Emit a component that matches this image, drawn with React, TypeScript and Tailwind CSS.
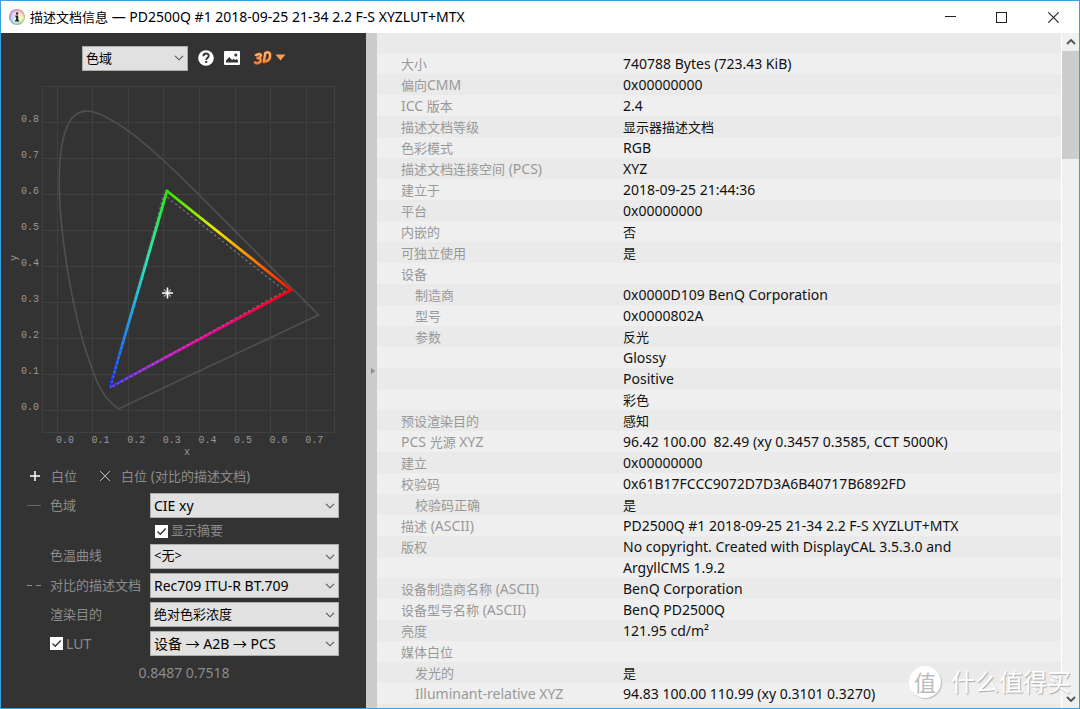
import React from "react";

const CJK = "font-['Noto_Sans','Noto_Sans_CJK_SC',sans-serif]";

type Row = { label?: string; value?: string; indent?: boolean };

const rows: Row[] = [
  {},
  { label: "大小", value: "740788 Bytes (723.43 KiB)" },
  { label: "偏向CMM", value: "0x00000000" },
  { label: "ICC 版本", value: "2.4" },
  { label: "描述文档等级", value: "显示器描述文档" },
  { label: "色彩模式", value: "RGB" },
  { label: "描述文档连接空间 (PCS)", value: "XYZ" },
  { label: "建立于", value: "2018-09-25 21:44:36" },
  { label: "平台", value: "0x00000000" },
  { label: "内嵌的", value: "否" },
  { label: "可独立使用", value: "是" },
  { label: "设备" },
  { label: "制造商", value: "0x0000D109 BenQ Corporation", indent: true },
  { label: "型号", value: "0x0000802A", indent: true },
  { label: "参数", value: "反光", indent: true },
  { value: "Glossy" },
  { value: "Positive" },
  { value: "彩色" },
  { label: "预设渲染目的", value: "感知" },
  { label: "PCS 光源 XYZ", value: "96.42 100.00  82.49 (xy 0.3457 0.3585, CCT 5000K)" },
  { label: "建立", value: "0x00000000" },
  { label: "校验码", value: "0x61B17FCCC9072D7D3A6B40717B6892FD" },
  { label: "校验码正确", value: "是", indent: true },
  { label: "描述 (ASCII)", value: "PD2500Q #1 2018-09-25 21-34 2.2 F-S XYZLUT+MTX" },
  { label: "版权", value: "No copyright. Created with DisplayCAL 3.5.3.0 and" },
  { value: "ArgyllCMS 1.9.2" },
  { label: "设备制造商名称 (ASCII)", value: "BenQ Corporation" },
  { label: "设备型号名称 (ASCII)", value: "BenQ PD2500Q" },
  { label: "亮度", value: "121.95 cd/m²" },
  { label: "媒体白位" },
  { label: "发光的", value: "是", indent: true },
  { label: "Illuminant-relative XYZ", value: "94.83 100.00 110.99 (xy 0.3101 0.3270)", indent: true },
  {},
];

const isHan = (s: string) => /[\u4e00-\u9fff]/.test(s);

/** Han runs are set one pixel smaller than the Latin runs beside them. */
function Mixed({ text }: { text: string }) {
  return (
    <>
      {text.split(/([\u4e00-\u9fff]+)/).map((part, i) =>
        isHan(part) ? (
          <span key={i} className="text-[13px]">
            {part}
          </span>
        ) : (
          part
        ),
      )}
    </>
  );
}

const px = (x: number) => 57 + x * 356;
const py = (y: number) => 410.5 - y * 360;

const locus: [number, number][] = [
  [0.1741, 0.005], [0.1714, 0.0051], [0.1644, 0.0109], [0.1566, 0.0177], [0.144, 0.0297],
  [0.1355, 0.0399], [0.1241, 0.0578], [0.1096, 0.0868], [0.0925, 0.1327], [0.0705, 0.2007],
  [0.0475, 0.295], [0.026, 0.4127], [0.0108, 0.5384], [0.0066, 0.6548], [0.0166, 0.7502],
  [0.0412, 0.811], [0.079, 0.8315], [0.117, 0.824], [0.1565, 0.8045], [0.1942, 0.781],
  [0.2303, 0.754], [0.2658, 0.7243], [0.3016, 0.6923], [0.3373, 0.6589], [0.3731, 0.6245],
  [0.4441, 0.5547], [0.5125, 0.4866], [0.5752, 0.4242], [0.627, 0.3725], [0.6915, 0.3083],
  [0.7347, 0.2653],
];

function locusPath() {
  const p = locus.map(([x, y]) => [px(x), py(y)]);
  let d = `M${p[0][0]} ${p[0][1]}`;
  for (let i = 0; i < p.length - 1; i++) {
    const a = p[Math.max(0, i - 1)];
    const b = p[i];
    const c = p[i + 1];
    const e = p[Math.min(p.length - 1, i + 2)];
    d += `C${b[0] + (c[0] - a[0]) / 6} ${b[1] + (c[1] - a[1]) / 6} ${c[0] - (e[0] - b[0]) / 6} ${c[1] - (e[1] - b[1]) / 6} ${c[0]} ${c[1]}`;
  }
  return d + "Z";
}

function Gamut() {
  const ticksX = [0, 0.1, 0.2, 0.3, 0.4, 0.5, 0.6, 0.7];
  const ticksY = [0, 0.1, 0.2, 0.3, 0.4, 0.5, 0.6, 0.7, 0.8];
  const tick = "fill-[#989898] font-['Liberation_Mono',monospace] text-[10px]";
  return (
    <svg viewBox="0 78 350 382" className="h-[382px] w-[350px] shrink-0" role="img" aria-label="CIE xy">
      <defs>
        <linearGradient id="gr" gradientUnits="userSpaceOnUse" x1="167" y1="191" x2="291" y2="290">
          <stop offset="0" stopColor="#37e000" />
          <stop offset="0.22" stopColor="#90ee00" />
          <stop offset="0.4" stopColor="#f2e600" />
          <stop offset="0.62" stopColor="#ff9800" />
          <stop offset="0.85" stopColor="#ff4800" />
          <stop offset="1" stopColor="#f01010" />
        </linearGradient>
        <linearGradient id="rb" gradientUnits="userSpaceOnUse" x1="291" y1="290" x2="110" y2="387">
          <stop offset="0" stopColor="#ff0008" />
          <stop offset="0.25" stopColor="#f80058" />
          <stop offset="0.55" stopColor="#f000b8" />
          <stop offset="0.75" stopColor="#b420e0" />
          <stop offset="1" stopColor="#3a2cf0" />
        </linearGradient>
        <linearGradient id="bg" gradientUnits="userSpaceOnUse" x1="110" y1="387" x2="167" y2="191">
          <stop offset="0" stopColor="#1428f0" />
          <stop offset="0.25" stopColor="#0c80ff" />
          <stop offset="0.45" stopColor="#10c8f0" />
          <stop offset="0.65" stopColor="#20f0c0" />
          <stop offset="0.85" stopColor="#28ee60" />
          <stop offset="1" stopColor="#30e010" />
        </linearGradient>
      </defs>
      <g stroke="#404040" fill="none">
        <rect x="42.5" y="86.5" width="292" height="346" />
        {ticksX.map((t) => (
          <path key={t} d={`M${Math.floor(px(t)) + 0.5} 86V432`} />
        ))}
        {ticksY.map((t) => (
          <path key={t} d={`M42 ${Math.floor(py(t)) + 0.5}H334`} />
        ))}
      </g>
      <path d={locusPath()} fill="none" stroke="#505050" strokeWidth="1.6" />
      <g fill="none" strokeWidth="2.8" strokeLinecap="round">
        <path d="M167 191L291 290" stroke="url(#gr)" />
        <path d="M291 290L110.500 387" stroke="url(#rb)" />
        <path d="M110 387L167 191" stroke="url(#bg)" />
      </g>
      <path
        d={`M${px(0.15)} ${py(0.063)}L${px(0.3)} ${py(0.6)}L${px(0.64)} ${py(0.332)}Z`}
        fill="none"
        stroke="#808080"
        strokeOpacity="0.8"
        strokeWidth="1.3"
        strokeDasharray="2.500 2.500"
      />
      <path d="M164 289.500L171 296.500M171 289.500L164 296.500" stroke="#a0a0a0" strokeWidth="1.2" />
      <path d="M162 293H173M167.500 287.500V298.500" stroke="#fff" strokeWidth="1.6" />
      {ticksX.map((t) => (
        <text key={t} x={px(t) + 8} y="443" textAnchor="middle" className={tick}>
          {t.toFixed(1)}
        </text>
      ))}
      {ticksY.map((t) => (
        <text key={t} x="39" y={py(t) - 0.5} textAnchor="end" className={tick}>
          {t.toFixed(1)}
        </text>
      ))}
      <text x="187" y="455" textAnchor="middle" className={tick}>x</text>
      <text transform="translate(17 258) rotate(-90)" textAnchor="middle" className={tick}>y</text>
    </svg>
  );
}

function Select({ id, label, value, width }: { id: string; label?: string; value: string; width: string }) {
  return (
    <div className={`relative h-[25px] ${width}`}>
      <select
        id={id}
        aria-label={label}
        className={`h-full w-full appearance-none rounded-none border border-[#adadad] bg-[#e1e1e1] pl-[3px] pr-5 text-black outline-none ${
          isHan(value) && !/[A-Z]/.test(value) ? "text-[13px]" : "text-[14px]"
        }`}
      >
        <option>{value}</option>
      </select>
      <svg viewBox="0 0 10 6" className="pointer-events-none absolute right-1 top-[10px] h-[6px] w-[10px]">
        <path d="M1 0.800L5 4.800L9 0.800" fill="none" stroke="#555" strokeWidth="1.1" />
      </svg>
    </div>
  );
}

function Check({ id, label }: { id: string; label: string }) {
  return (
    <label htmlFor={id} className="flex items-center gap-[3px]">
      <span className="relative size-[13px]">
        <input id={id} type="checkbox" defaultChecked className="block size-[13px] appearance-none bg-white" />
        <svg viewBox="0 0 13 13" className="pointer-events-none absolute inset-0">
          <path d="M2.500 6.500L5.300 9.300L10.700 3.500" fill="none" stroke="#333" strokeWidth="1.3" />
        </svg>
      </span>
      <Mixed text={label} />
    </label>
  );
}

function Toolbar() {
  return (
    <div className="flex h-[45px] items-center pl-[81px] pt-1">
      <Select id="view" label="视图" value="色域" width="w-[106px]" />
      <button aria-label="帮助" className="ml-[10px]">
        <svg viewBox="0 0 16 16" className="size-4">
          <circle cx="8" cy="8" r="7.800" fill="#fff" />
          <path d="M5.400 6.300C5.400 2.600 10.700 2.700 10.700 5.900C10.700 7.800 8.200 7.900 8.200 10" fill="none" stroke="#333" strokeWidth="1.900" />
          <rect x="7.200" y="11" width="2" height="2" fill="#333" />
        </svg>
      </button>
      <button aria-label="保存图像" className="ml-[10px]">
        <svg viewBox="0 0 16 14" className="h-[14px] w-4">
          <rect width="16" height="14" rx="1" fill="#fff" />
          <path d="M2 11.500V9.500L5.300 6L8 9L9.800 7.800L11 9L12.500 8L14 9.500V11.500Z" fill="#333" />
          <circle cx="11.800" cy="4" r="1.500" fill="#333" />
        </svg>
      </button>
      <button aria-label="3D" className="ml-[13px] flex items-center">
        <svg viewBox="0 0 34 18" className="h-[18px] w-[34px]">
          <defs>
            <linearGradient id="o" gradientUnits="userSpaceOnUse" x1="0" y1="2" x2="0" y2="16">
              <stop offset="0" stopColor="#ffc28a" />
              <stop offset="1" stopColor="#f47c2c" />
            </linearGradient>
          </defs>
          <g fill="none" strokeLinejoin="round">
            <g stroke="#8a4216" strokeWidth="3.600">
              <path d="M2.300 7C4 4.600 8.600 4.200 7.800 7C7.400 8.700 5.500 9 4.700 9.200C9 9 8 13.200 5.300 14C3.600 14.500 2 14 1.800 12.500" />
              <path d="M10.800 12.800L12.300 4L14.500 3.300C18.300 2.600 18 11.200 13.200 12.200Z" />
            </g>
            <g stroke="url(#o)" strokeWidth="2.200">
              <path d="M2.300 7C4 4.600 8.600 4.200 7.800 7C7.400 8.700 5.500 9 4.700 9.200C9 9 8 13.200 5.300 14C3.600 14.500 2 14 1.800 12.500" />
              <path d="M10.800 12.800L12.300 4L14.500 3.300C18.300 2.600 18 11.200 13.200 12.200Z" />
            </g>
          </g>
          <path d="M22.500 5.500H32.500L27.500 11.500Z" fill="#ff9a48" />
        </svg>
      </button>
    </div>
  );
}

function Controls() {
  return (
    <div className="pr-[27px] text-[14px] text-[#8c8c8c]">
      <div className="flex h-[29px] items-center pl-7">
        <svg viewBox="0 0 12 12" className="size-3">
          <path d="M1 6H11M6 1V11" stroke="#fff" strokeWidth="1.5" />
        </svg>
        <span className="ml-[10px]"><Mixed text="白位" /></span>
        <svg viewBox="0 0 12 12" className="ml-[22px] size-3">
          <path d="M1 1L11 11M11 1L1 11" stroke="#111" strokeWidth="2.600" />
          <path d="M1 1L11 11M11 1L1 11" stroke="#aaa" strokeWidth="1.100" />
        </svg>
        <span className="ml-[10px]"><Mixed text="白位 (对比的描述文档)" /></span>
      </div>
      <div className="grid grid-cols-[23px_100px_1fr] items-center pl-[26px]">
        <span className="h-px w-[14px] bg-[#666]" />
        <label htmlFor="space" className="flex h-[31px] items-center whitespace-nowrap"><Mixed text="色域" /></label>
        <Select id="space" value="CIE xy" width="w-full" />

        <div className="col-start-3 flex h-5 items-center pl-[5px]">
          <Check id="summary" label="显示摘要" />
        </div>

        <label htmlFor="locus" className="col-start-2 flex h-[30px] items-center whitespace-nowrap"><Mixed text="色温曲线" /></label>
        <Select id="locus" value="<无>" width="w-full" />

        <span className="flex gap-1">
          <span className="h-px w-[5px] bg-[#8c8c8c]" />
          <span className="h-px w-[5px] bg-[#8c8c8c]" />
        </span>
        <label htmlFor="compare" className="flex h-[29px] items-center whitespace-nowrap"><Mixed text="对比的描述文档" /></label>
        <Select id="compare" value="Rec709 ITU-R BT.709" width="w-full" />

        <label htmlFor="intent" className="col-start-2 flex h-[29px] items-center whitespace-nowrap"><Mixed text="渲染目的" /></label>
        <Select id="intent" value="绝对色彩浓度" width="w-full" />

        <div className="col-start-2 flex h-[29px] items-center">
          <Check id="lut" label="LUT" />
        </div>
        <Select id="direction" label="LUT" value="设备 → A2B → PCS" width="w-full" />
      </div>
      <p className="mt-1 h-[21px] pl-7 text-center">0.8487 0.7518</p>
    </div>
  );
}

function TitleBar() {
  return (
    <header className="flex h-8 shrink-0 items-center bg-white text-black">
      <span className="relative ml-2 mr-[5px] flex size-4 items-center justify-center rounded-full bg-[conic-gradient(#f6a8c8,#f7c9a0,#eef0a0,#a8e8a0,#a0e8e0,#a8b8f4,#d8a8f0,#f6a8c8)] ring-1 ring-inset ring-[#7a7a7a66]">
        <svg viewBox="0 0 16 16" className="size-4">
          <circle cx="8" cy="8" r="5.500" fill="#fff" opacity="0.550" />
          <path d="M7 3.500H9.200V5.500H7ZM6.300 6.600H9.200V11.300H10.200V12.500H6V11.300H7.100V7.800H6.300Z" fill="#222" />
        </svg>
      </span>
      <h1 className="flex-1 truncate text-[14px]">
        <Mixed text="描述文档信息 — PD2500Q #1 2018-09-25 21-34 2.2 F-S XYZLUT+MTX" />
      </h1>
      <div className="flex">
        <button aria-label="最小化" className="flex h-8 w-[51px] items-center justify-center">
          <svg viewBox="0 0 11 11" className="size-[11px]"><path d="M0 4.500H11" stroke="#222" /></svg>
        </button>
        <button aria-label="最大化" className="flex h-8 w-[51px] items-center justify-center">
          <svg viewBox="0 0 11 11" className="size-[11px]"><rect x="0.500" y="0.500" width="10" height="10" fill="none" stroke="#222" /></svg>
        </button>
        <button aria-label="关闭" className="flex h-8 w-[52px] items-center justify-center">
          <svg viewBox="0 0 11 11" className="size-[11px]"><path d="M0.300 0.300L10.700 10.700M10.700 0.300L0.300 10.700" stroke="#222" strokeWidth="1.100" /></svg>
        </button>
      </div>
    </header>
  );
}

export default function App() {
  return (
    <div className={`relative flex h-screen flex-col overflow-hidden border border-[#3c9fe0] ${CJK}`}>
      <TitleBar />
      <main className="flex min-h-0 flex-1">
        <section className="w-[365px] shrink-0 overflow-hidden bg-[#333]">
          <Toolbar />
          <div className="-ml-px">
            <Gamut />
          </div>
          <div className="mt-px">
            <Controls />
          </div>
        </section>
        <div className="flex w-[11px] shrink-0 items-center justify-end bg-[#cbcbcb] pr-[2px]">
          <svg viewBox="0 0 4 6" className="h-[6px] w-1"><path d="M0 0L4 3L0 6Z" fill="#8a8a8a" /></svg>
        </div>
        <section className="min-w-0 flex-1 overflow-hidden bg-[#efefef]">
          <table className="w-full table-fixed border-collapse text-[14px] leading-[20px]">
            <colgroup>
              <col className="w-[246px]" />
              <col />
            </colgroup>
            <tbody>
              {rows.map((r, i) => (
                <tr key={i} className="h-[21px] odd:bg-[#eaeaea] even:bg-[#efefef] first:h-5">
                  <th scope="row" className={`whitespace-nowrap p-0 text-left font-normal text-[#999] ${r.indent ? "pl-[38px]" : "pl-6"}`}>
                    {r.label && <Mixed text={r.label} />}
                  </th>
                  <td className="whitespace-pre p-0 text-[#111]">{r.value && <Mixed text={r.value} />}</td>
                </tr>
              ))}
            </tbody>
          </table>
        </section>
        <div className="flex w-[18px] shrink-0 flex-col items-center border-l border-white bg-[#f0f0f0]">
          <button aria-label="向上滚动" className="flex h-[18px] w-full shrink-0 items-center justify-center">
            <svg viewBox="0 0 10 6" className="h-[6px] w-[10px]"><path d="M1 5L5 1L9 5" fill="none" stroke="#555" strokeWidth="1.900" /></svg>
          </button>
          <div className="h-[108px] w-full bg-[#cdcdcd]" />
          <button aria-label="向下滚动" className="mt-auto flex h-[18px] w-full shrink-0 items-center justify-center">
            <svg viewBox="0 0 10 6" className="h-[6px] w-[10px]"><path d="M1 1L5 5L9 1" fill="none" stroke="#555" strokeWidth="1.900" /></svg>
          </button>
        </div>
      </main>
      <div className="pointer-events-none absolute bottom-[10px] right-2 flex items-center gap-[10px] text-white">
        <span className="flex size-8 items-center justify-center rounded-full bg-white text-[22px] leading-none text-[#bdbdbd] shadow-[1px_1px_1px_#bbb]">值</span>
        <span className="text-[24px] leading-8 [text-shadow:1px_1px_1px_#aaa]">什么值得买</span>
      </div>
    </div>
  );
}
